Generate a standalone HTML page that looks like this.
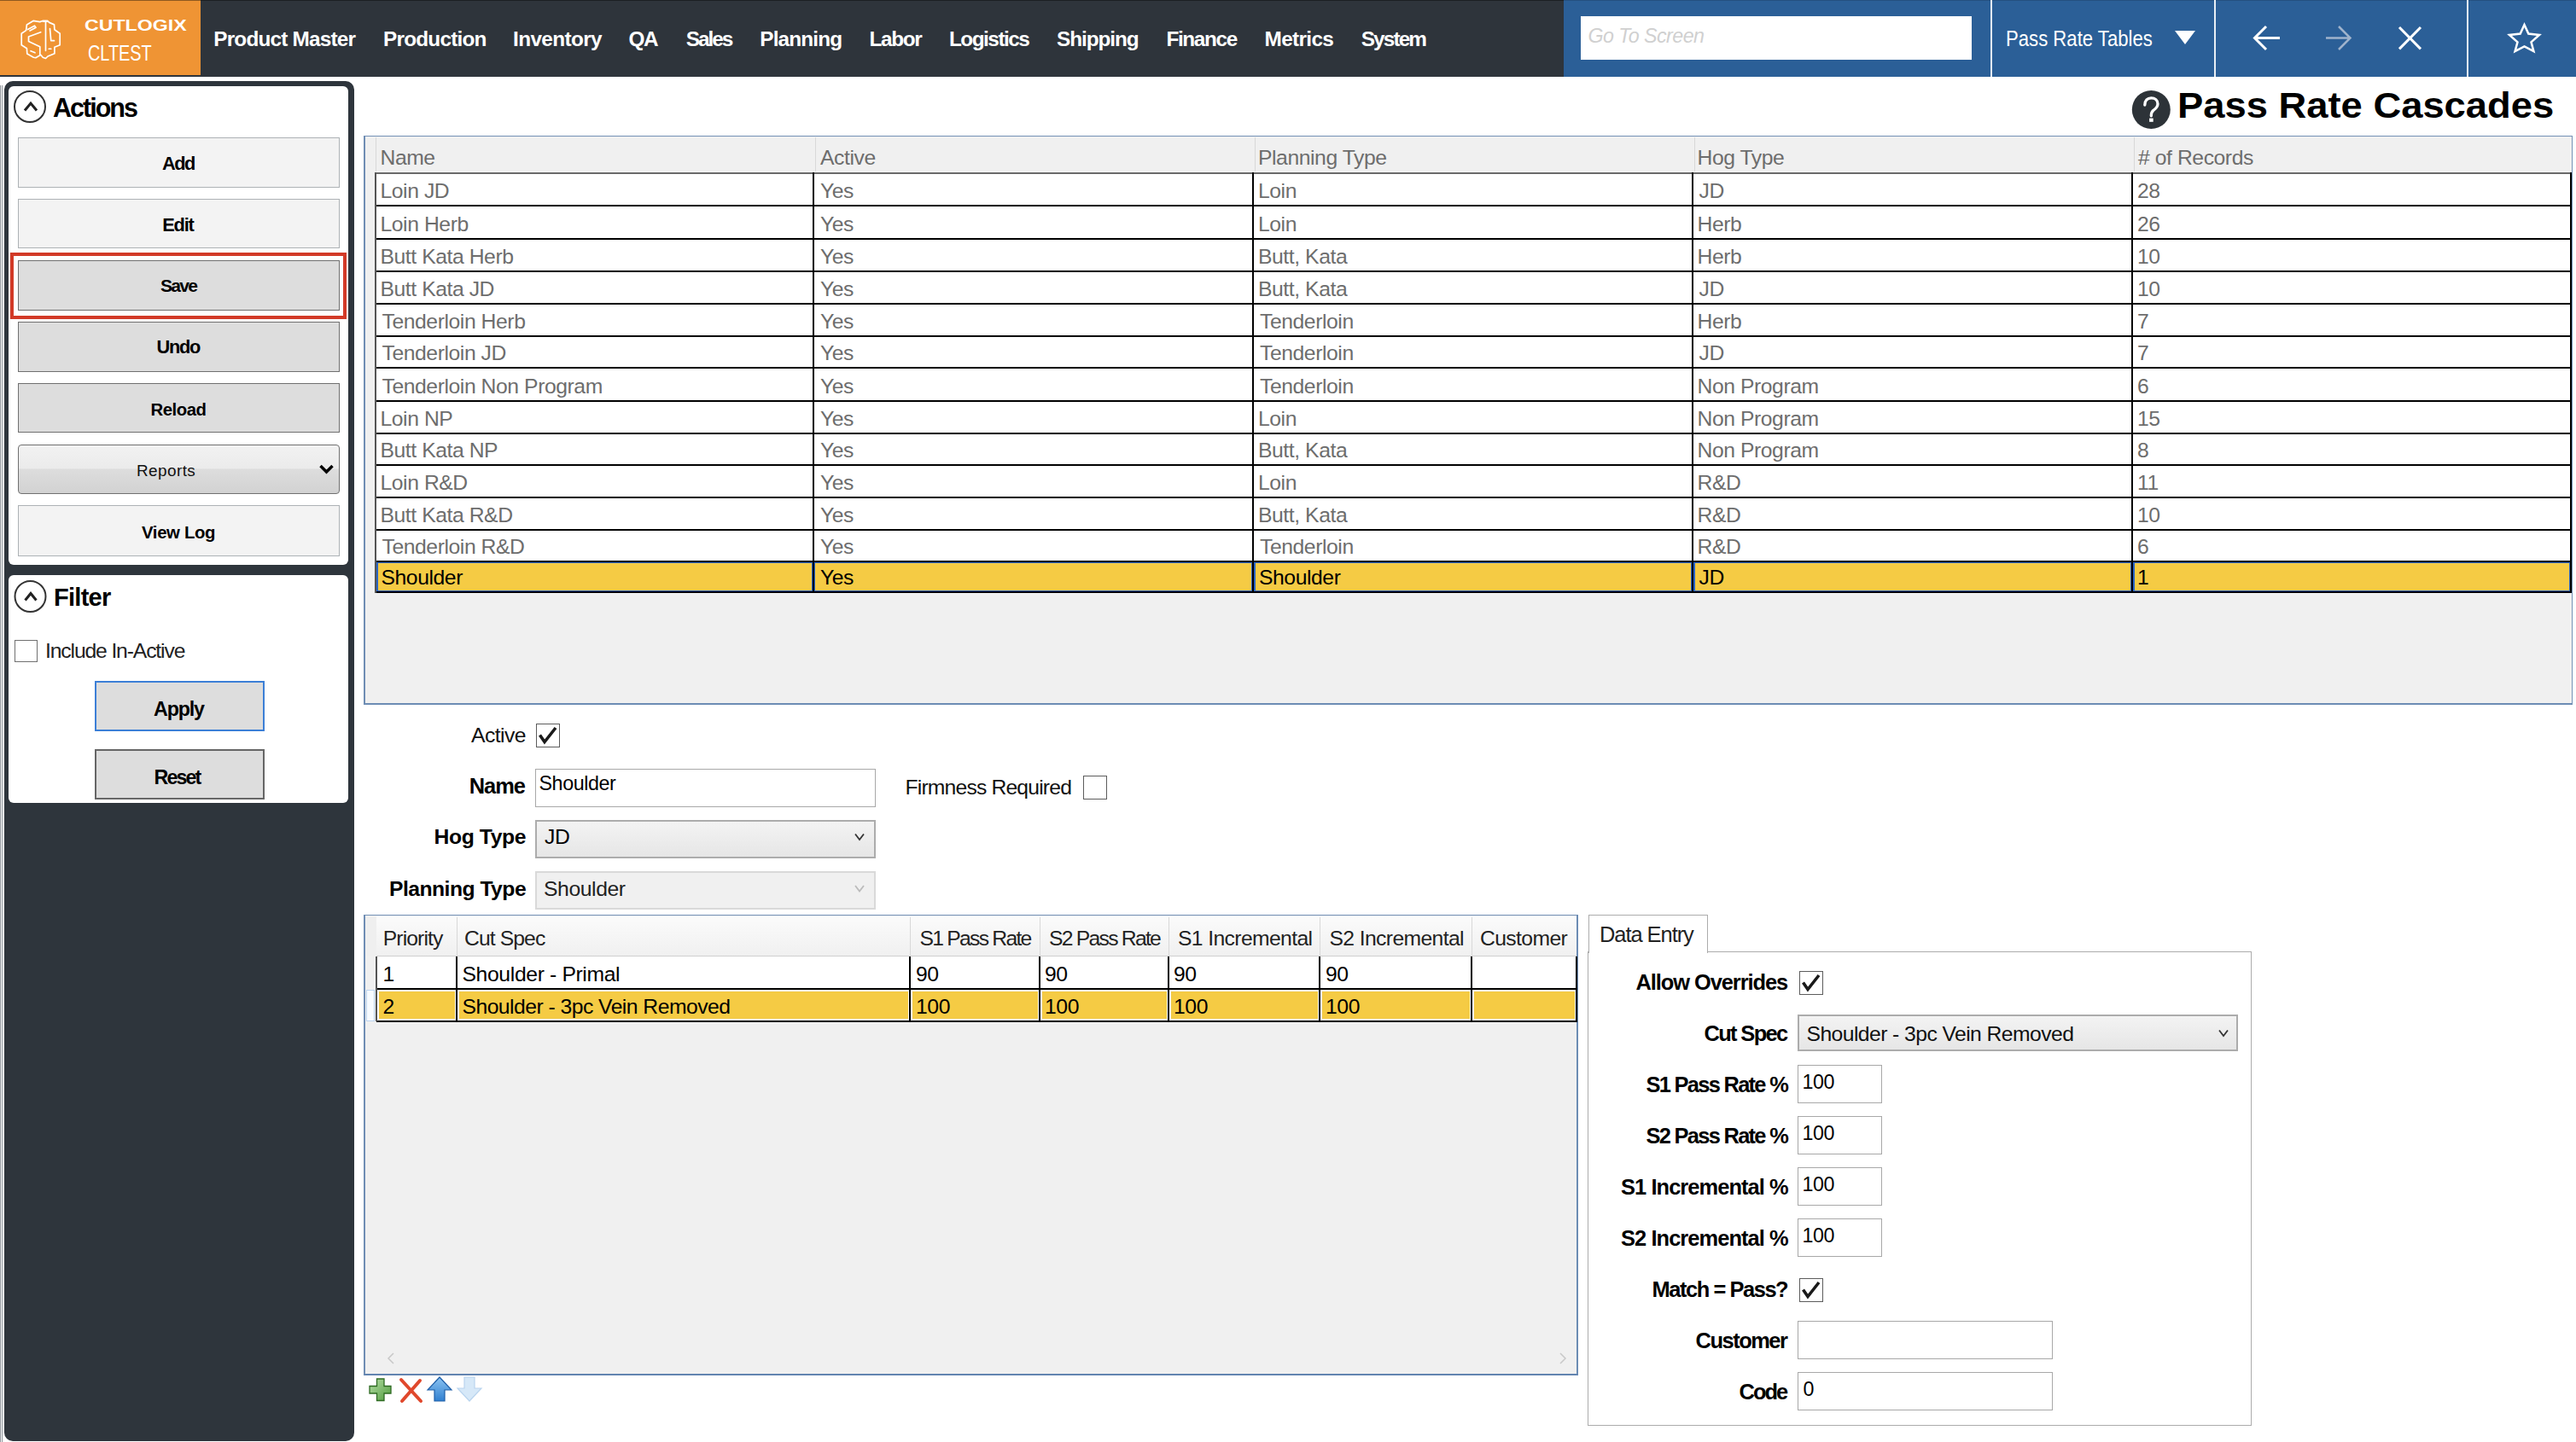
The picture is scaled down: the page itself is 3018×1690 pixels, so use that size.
<!DOCTYPE html>
<html><head><meta charset="utf-8"><style>
html,body{margin:0;padding:0;}
body{width:3018px;height:1690px;position:relative;overflow:hidden;background:#fff;font-family:"Liberation Sans",sans-serif;}
body>div,body>span,body>svg{position:absolute;box-sizing:border-box;}
.t{white-space:nowrap;line-height:normal;}
</style></head><body>
<div style="left:0px;top:0px;width:3018px;height:90px;background:#2e343b;"></div>
<div style="left:0px;top:0px;width:235px;height:88px;background:#ef9434;"></div>
<div style="left:1832px;top:0px;width:1186px;height:90px;background:#2b5f97;"></div>
<div style="left:0px;top:0px;width:1832px;height:1px;background:rgba(0,0,0,0.4);"></div>
<div style="left:1832px;top:0px;width:1186px;height:1px;background:rgba(0,0,0,0.15);"></div>
<div style="left:2332px;top:0px;width:2px;height:90px;background:#e8eef5;"></div>
<div style="left:2594px;top:0px;width:2px;height:90px;background:#e8eef5;"></div>
<div style="left:2890px;top:0px;width:2px;height:90px;background:#e8eef5;"></div>
<div style="left:1852px;top:19px;width:458px;height:51px;background:#fff;"></div>
<span class="t" style="left:1860.50px;top:29.20px;font-size:23.26px;color:#d0d0d0;font-style:italic;letter-spacing:-0.56px;">Go To Screen</span>
<span class="t" style="left:2350.28px;top:31.30px;font-size:25.73px;color:#fff;transform:scaleX(0.8607);transform-origin:0 0;">Pass Rate Tables</span>
<svg style="left:0;top:0" width="3018" height="90"><polygon points="2548,36 2572,36 2560,52" fill="#fff"/><g stroke="#fff" stroke-width="3" fill="none" stroke-linecap="butt"><path d="M2671,44.5 H2642 M2655,31 L2641.5,44.5 L2655,58"/><path d="M2811,32 L2836,57.4 M2836,32 L2811,57.4"/></g><g stroke="#9fb3cc" stroke-width="2.5" fill="none"><path d="M2725,44.5 H2753 M2740,31 L2753.5,44.5 L2740,58"/></g><polygon points="2957.5,29 2962.3,39.6 2975,40.9 2965.5,49.3 2968.4,60 2957.5,54.3 2946.6,60 2949.5,49.3 2940,40.9 2952.7,39.6" fill="none" stroke="#fff" stroke-width="2.5" stroke-linejoin="miter"/></svg>
<span class="t" style="left:250.25px;top:31.75px;font-size:24.35px;color:#fff;font-weight:bold;letter-spacing:-0.80px;">Product Master</span>
<span class="t" style="left:449.00px;top:31.75px;font-size:24.35px;color:#fff;font-weight:bold;letter-spacing:-0.78px;">Production</span>
<span class="t" style="left:601.00px;top:31.75px;font-size:24.35px;color:#fff;font-weight:bold;letter-spacing:-0.62px;">Inventory</span>
<span class="t" style="left:736.50px;top:31.75px;font-size:24.35px;color:#fff;font-weight:bold;letter-spacing:-1.42px;">QA</span>
<span class="t" style="left:803.75px;top:31.75px;font-size:24.35px;color:#fff;font-weight:bold;letter-spacing:-2.01px;">Sales</span>
<span class="t" style="left:890.25px;top:31.75px;font-size:24.35px;color:#fff;font-weight:bold;letter-spacing:-0.84px;">Planning</span>
<span class="t" style="left:1018.50px;top:31.75px;font-size:24.35px;color:#fff;font-weight:bold;letter-spacing:-1.34px;">Labor</span>
<span class="t" style="left:1112.00px;top:31.75px;font-size:24.35px;color:#fff;font-weight:bold;letter-spacing:-1.50px;">Logistics</span>
<span class="t" style="left:1238.00px;top:31.75px;font-size:24.35px;color:#fff;font-weight:bold;letter-spacing:-1.06px;">Shipping</span>
<span class="t" style="left:1366.50px;top:31.75px;font-size:24.35px;color:#fff;font-weight:bold;letter-spacing:-1.38px;">Finance</span>
<span class="t" style="left:1481.60px;top:31.75px;font-size:24.35px;color:#fff;font-weight:bold;letter-spacing:-0.66px;">Metrics</span>
<span class="t" style="left:1594.75px;top:31.75px;font-size:24.35px;color:#fff;font-weight:bold;letter-spacing:-1.87px;">System</span>
<span class="t" style="left:98.75px;top:19.25px;font-size:18.90px;color:#fff;font-weight:bold;transform:scaleX(1.2254);transform-origin:0 0;">CUTLOGIX</span>
<span class="t" style="left:103.24px;top:46.60px;font-size:26.16px;color:#fff;transform:scaleX(0.7600);transform-origin:0 0;">CLTEST</span>
<svg style="left:16px;top:16px" width="64" height="60" viewBox="0 0 64 60"><g fill="none" stroke="#fff" stroke-width="1.7" stroke-linejoin="round" stroke-linecap="round"><path d="M23.3,8.3 L30.8,9.6 L34.6,8.3 L39.6,8.3 L41.7,10.4 L47.5,12.9 L47.9,18.75 L54.2,23.3 L54.2,36.7 L47.9,39.2 L47.9,46.7 L40,50 L37.5,52.5 L34.2,51.25 L31.7,48.3 L25.8,51.7 L23.3,51.25 L15.8,47.1 L15.4,40.8 L9.2,36.7 L9.2,23.3 L14.6,19.6 L15.4,12.9 Z"/><path d="M37.5,9.2 V43.3 M34.6,9.2 H40"/><path d="M16.5,18.5 L24.5,14.2 L26,16.2 L19,20"/><path d="M31.7,21.7 L17.5,27 L17.5,32.5 L30.8,38.75 L30.8,48"/><path d="M20,43.75 L25,45.8"/><path d="M42.5,17.5 L43.75,31.7 L47.5,31.7 M41.25,41.25 L43.75,41.25"/></g></svg>
<div style="left:0px;top:100px;width:1px;height:1590px;background:#8d9399;"></div>
<div style="left:2px;top:100px;width:1px;height:1590px;background:#8d9399;"></div>
<div style="left:4.5px;top:94.5px;width:410px;height:1594.5px;background:#2e353c;border-radius:10px;"></div>
<div style="left:10.3px;top:100.5px;width:397.7px;height:561.5px;background:#fff;border-radius:6px;"></div>
<div style="left:10.3px;top:674px;width:397.7px;height:267px;background:#fff;border-radius:6px;"></div>
<svg style="left:0;top:90px" width="60" height="650"><g fill="none" stroke="#333" stroke-width="2"><circle cx="35" cy="35" r="18"/><circle cx="35.5" cy="609" r="18"/></g><g fill="none" stroke="#222" stroke-width="3"><path d="M29,39.5 L36,31 L43,39.5"/><path d="M29.5,613.5 L36,605.5 L42.5,613.5"/></g></svg>
<span class="t" style="left:62.00px;top:109.00px;font-size:30.52px;color:#000;font-weight:bold;letter-spacing:-1.99px;">Actions</span>
<span class="t" style="left:63.00px;top:684.00px;font-size:29.07px;color:#000;font-weight:bold;letter-spacing:-0.75px;">Filter</span>
<div style="left:21px;top:160.5px;width:377px;height:59.0px;background:#f3f3f3;border:1.5px solid #adb2b5;"></div>
<span class="t" style="left:190.00px;top:179.00px;font-size:21.80px;color:#000;font-weight:bold;letter-spacing:-1.53px;">Add</span>
<div style="left:21px;top:233px;width:377px;height:58px;background:#f3f3f3;border:1.5px solid #adb2b5;"></div>
<span class="t" style="left:190.25px;top:250.50px;font-size:21.80px;color:#000;font-weight:bold;letter-spacing:-1.22px;">Edit</span>
<div style="left:12px;top:296px;width:394px;height:78px;border:4.5px solid #d23a27;"></div>
<div style="left:21px;top:304.5px;width:377px;height:59.5px;background:#dddddd;border:1.5px solid #707070;"></div>
<span class="t" style="left:188.00px;top:323.00px;font-size:21.08px;color:#000;font-weight:bold;letter-spacing:-1.74px;">Save</span>
<div style="left:21px;top:377px;width:377px;height:58.5px;background:#dddddd;border:1.5px solid #707070;"></div>
<span class="t" style="left:183.50px;top:393.75px;font-size:21.80px;color:#000;font-weight:bold;letter-spacing:-1.29px;">Undo</span>
<div style="left:21px;top:449px;width:377px;height:58px;background:#dddddd;border:1.5px solid #707070;"></div>
<span class="t" style="left:176.60px;top:468.50px;font-size:20.35px;color:#000;font-weight:bold;letter-spacing:-0.51px;">Reload</span>
<div style="left:21px;top:521px;width:377px;height:58px;background:linear-gradient(#f2f2f2 0%,#ebebeb 48%,#dddddd 50%,#d2d2d2 100%);border:1.5px solid #707070;border-radius:4px;"></div>
<span class="t" style="left:160.00px;top:540.70px;font-size:18.90px;color:#111;letter-spacing:0.44px;">Reports</span>
<svg style="left:370px;top:540px" width="26" height="20"><path d="M5.5,6 L12.5,13 L19.5,6" fill="none" stroke="#000" stroke-width="3.5"/></svg>
<div style="left:21px;top:592.4px;width:377px;height:59.39999999999998px;background:#f3f3f3;border:1.5px solid #adb2b5;"></div>
<span class="t" style="left:166.00px;top:612.50px;font-size:20.35px;color:#000;font-weight:bold;letter-spacing:-0.35px;">View Log</span>
<div style="left:17px;top:750px;width:27px;height:26px;background:#fff;border:1.5px solid #707070;"></div>
<span class="t" style="left:53.00px;top:749.00px;font-size:24.71px;color:#222;letter-spacing:-1.14px;">Include In-Active</span>
<div style="left:111px;top:798px;width:199px;height:59px;background:#dddddd;border:2px solid #3c7fd6;"></div>
<span class="t" style="left:180.00px;top:817.50px;font-size:23.26px;color:#000;font-weight:bold;letter-spacing:-1.16px;">Apply</span>
<div style="left:111px;top:878px;width:199px;height:59px;background:#dddddd;border:2px solid #666;"></div>
<span class="t" style="left:180.50px;top:897.50px;font-size:23.26px;color:#000;font-weight:bold;letter-spacing:-1.90px;">Reset</span>
<svg style="left:2490px;top:100px" width="60" height="60"><circle cx="30.3" cy="28.5" r="22.5" fill="#2d3338"/><path d="M22.8,23 C22.8,17.5 26,14.8 30.3,14.8 C34.8,14.8 38,17.5 38,21.8 C38,25.8 35.2,27.6 32.8,29.4 C30.8,31 30.3,32.5 30.3,35.8" fill="none" stroke="#fff" stroke-width="3.3" stroke-linecap="round"/><rect x="28.1" y="38.6" width="4.6" height="4.2" fill="#fff"/></svg>
<span class="t" style="left:2550.90px;top:99.30px;font-size:43.31px;color:#000;font-weight:bold;transform:scaleX(1.0475);transform-origin:0 0;">Pass Rate Cascades</span>
<div style="left:426px;top:159px;width:2588px;height:667px;background:#f0f0f0;border:1.5px solid #7391b6;border-left:2.3px solid #6f8db4;border-bottom:2px solid #6c8cb4;"></div>
<div style="left:954.5px;top:161px;width:1px;height:40px;background:#d8d8d8;"></div>
<div style="left:1470px;top:161px;width:1px;height:40px;background:#d8d8d8;"></div>
<div style="left:1985px;top:161px;width:1px;height:40px;background:#d8d8d8;"></div>
<div style="left:2500px;top:161px;width:1px;height:40px;background:#d8d8d8;"></div>
<div style="left:440px;top:161px;width:1px;height:40px;background:#d8d8d8;"></div>
<div style="left:440px;top:202px;width:2573px;height:492px;background:#fff;"></div>
<div style="left:439px;top:202px;width:2574px;height:2px;background:#6a6a6a;"></div>
<div style="left:440px;top:657.5px;width:2573px;height:36.5px;background:#f5cb44;"></div>
<div style="left:440.5px;top:658.0px;width:512.0px;height:36.0px;border:2.2px solid #2a64c4;"></div>
<div style="left:953.0px;top:658.0px;width:515.0px;height:36.0px;border:2.2px solid #2a64c4;"></div>
<div style="left:1468.5px;top:658.0px;width:514.5px;height:36.0px;border:2.2px solid #2a64c4;"></div>
<div style="left:1983.5px;top:658.0px;width:514.5px;height:36.0px;border:2.2px solid #2a64c4;"></div>
<div style="left:2498.5px;top:658.0px;width:513.5px;height:36.0px;border:2.2px solid #2a64c4;"></div>
<div style="left:439px;top:240px;width:2574px;height:2px;background:#000;"></div>
<div style="left:439px;top:278.5px;width:2574px;height:2px;background:#000;"></div>
<div style="left:439px;top:316.5px;width:2574px;height:2px;background:#000;"></div>
<div style="left:439px;top:354.5px;width:2574px;height:2px;background:#000;"></div>
<div style="left:439px;top:392.75px;width:2574px;height:2px;background:#000;"></div>
<div style="left:439px;top:430px;width:2574px;height:2px;background:#000;"></div>
<div style="left:439px;top:468.5px;width:2574px;height:2px;background:#000;"></div>
<div style="left:439px;top:506.5px;width:2574px;height:2px;background:#000;"></div>
<div style="left:439px;top:544px;width:2574px;height:2px;background:#000;"></div>
<div style="left:439px;top:581.5px;width:2574px;height:2px;background:#000;"></div>
<div style="left:439px;top:620px;width:2574px;height:2px;background:#000;"></div>
<div style="left:439px;top:656.5px;width:2574px;height:2px;background:#000;"></div>
<div style="left:439px;top:693px;width:2574px;height:2px;background:#000;"></div>
<div style="left:951.5px;top:202px;width:2px;height:493px;background:#000;"></div>
<div style="left:1467px;top:202px;width:2px;height:493px;background:#000;"></div>
<div style="left:1982px;top:202px;width:2px;height:493px;background:#000;"></div>
<div style="left:2497px;top:202px;width:2px;height:493px;background:#000;"></div>
<div style="left:3011px;top:202px;width:2px;height:493px;background:#000;"></div>
<div style="left:439px;top:202px;width:2px;height:493px;background:#555;"></div>
<span class="t" style="left:445.50px;top:170.50px;font-size:24.71px;color:#6d6d6d;letter-spacing:-0.43px;">Name</span>
<span class="t" style="left:961.00px;top:170.50px;font-size:24.71px;color:#6d6d6d;letter-spacing:-0.43px;">Active</span>
<span class="t" style="left:1474.00px;top:170.50px;font-size:24.71px;color:#6d6d6d;letter-spacing:-0.43px;">Planning Type</span>
<span class="t" style="left:1988.50px;top:170.50px;font-size:24.71px;color:#6d6d6d;letter-spacing:-0.43px;">Hog Type</span>
<span class="t" style="left:2505.00px;top:170.50px;font-size:24.71px;color:#6d6d6d;letter-spacing:-0.43px;"># of Records</span>
<span class="t" style="left:445.50px;top:210.00px;font-size:24.71px;color:#6d6d6d;letter-spacing:-0.43px;">Loin JD</span>
<span class="t" style="left:961.00px;top:210.00px;font-size:24.71px;color:#6d6d6d;letter-spacing:-0.43px;">Yes</span>
<span class="t" style="left:1474.00px;top:210.00px;font-size:24.71px;color:#6d6d6d;letter-spacing:-0.43px;">Loin</span>
<span class="t" style="left:1990.50px;top:210.00px;font-size:24.71px;color:#6d6d6d;letter-spacing:-0.43px;">JD</span>
<span class="t" style="left:2504.00px;top:210.00px;font-size:24.71px;color:#6d6d6d;letter-spacing:-0.43px;">28</span>
<span class="t" style="left:445.50px;top:248.50px;font-size:24.71px;color:#6d6d6d;letter-spacing:-0.43px;">Loin Herb</span>
<span class="t" style="left:961.00px;top:248.50px;font-size:24.71px;color:#6d6d6d;letter-spacing:-0.43px;">Yes</span>
<span class="t" style="left:1474.00px;top:248.50px;font-size:24.71px;color:#6d6d6d;letter-spacing:-0.43px;">Loin</span>
<span class="t" style="left:1988.50px;top:248.50px;font-size:24.71px;color:#6d6d6d;letter-spacing:-0.43px;">Herb</span>
<span class="t" style="left:2504.00px;top:248.50px;font-size:24.71px;color:#6d6d6d;letter-spacing:-0.43px;">26</span>
<span class="t" style="left:445.50px;top:286.50px;font-size:24.71px;color:#6d6d6d;letter-spacing:-0.43px;">Butt Kata Herb</span>
<span class="t" style="left:961.00px;top:286.50px;font-size:24.71px;color:#6d6d6d;letter-spacing:-0.43px;">Yes</span>
<span class="t" style="left:1474.00px;top:286.50px;font-size:24.71px;color:#6d6d6d;letter-spacing:-0.43px;">Butt, Kata</span>
<span class="t" style="left:1988.50px;top:286.50px;font-size:24.71px;color:#6d6d6d;letter-spacing:-0.43px;">Herb</span>
<span class="t" style="left:2504.00px;top:286.50px;font-size:24.71px;color:#6d6d6d;letter-spacing:-0.43px;">10</span>
<span class="t" style="left:445.50px;top:324.50px;font-size:24.71px;color:#6d6d6d;letter-spacing:-0.43px;">Butt Kata JD</span>
<span class="t" style="left:961.00px;top:324.50px;font-size:24.71px;color:#6d6d6d;letter-spacing:-0.43px;">Yes</span>
<span class="t" style="left:1474.00px;top:324.50px;font-size:24.71px;color:#6d6d6d;letter-spacing:-0.43px;">Butt, Kata</span>
<span class="t" style="left:1990.50px;top:324.50px;font-size:24.71px;color:#6d6d6d;letter-spacing:-0.43px;">JD</span>
<span class="t" style="left:2504.00px;top:324.50px;font-size:24.71px;color:#6d6d6d;letter-spacing:-0.43px;">10</span>
<span class="t" style="left:447.50px;top:362.75px;font-size:24.71px;color:#6d6d6d;letter-spacing:-0.43px;">Tenderloin Herb</span>
<span class="t" style="left:961.00px;top:362.75px;font-size:24.71px;color:#6d6d6d;letter-spacing:-0.43px;">Yes</span>
<span class="t" style="left:1476.00px;top:362.75px;font-size:24.71px;color:#6d6d6d;letter-spacing:-0.43px;">Tenderloin</span>
<span class="t" style="left:1988.50px;top:362.75px;font-size:24.71px;color:#6d6d6d;letter-spacing:-0.43px;">Herb</span>
<span class="t" style="left:2504.00px;top:362.75px;font-size:24.71px;color:#6d6d6d;letter-spacing:-0.43px;">7</span>
<span class="t" style="left:447.50px;top:400.00px;font-size:24.71px;color:#6d6d6d;letter-spacing:-0.43px;">Tenderloin JD</span>
<span class="t" style="left:961.00px;top:400.00px;font-size:24.71px;color:#6d6d6d;letter-spacing:-0.43px;">Yes</span>
<span class="t" style="left:1476.00px;top:400.00px;font-size:24.71px;color:#6d6d6d;letter-spacing:-0.43px;">Tenderloin</span>
<span class="t" style="left:1990.50px;top:400.00px;font-size:24.71px;color:#6d6d6d;letter-spacing:-0.43px;">JD</span>
<span class="t" style="left:2504.00px;top:400.00px;font-size:24.71px;color:#6d6d6d;letter-spacing:-0.43px;">7</span>
<span class="t" style="left:447.50px;top:438.50px;font-size:24.71px;color:#6d6d6d;letter-spacing:-0.43px;">Tenderloin Non Program</span>
<span class="t" style="left:961.00px;top:438.50px;font-size:24.71px;color:#6d6d6d;letter-spacing:-0.43px;">Yes</span>
<span class="t" style="left:1476.00px;top:438.50px;font-size:24.71px;color:#6d6d6d;letter-spacing:-0.43px;">Tenderloin</span>
<span class="t" style="left:1988.50px;top:438.50px;font-size:24.71px;color:#6d6d6d;letter-spacing:-0.43px;">Non Program</span>
<span class="t" style="left:2504.00px;top:438.50px;font-size:24.71px;color:#6d6d6d;letter-spacing:-0.43px;">6</span>
<span class="t" style="left:445.50px;top:476.50px;font-size:24.71px;color:#6d6d6d;letter-spacing:-0.43px;">Loin NP</span>
<span class="t" style="left:961.00px;top:476.50px;font-size:24.71px;color:#6d6d6d;letter-spacing:-0.43px;">Yes</span>
<span class="t" style="left:1474.00px;top:476.50px;font-size:24.71px;color:#6d6d6d;letter-spacing:-0.43px;">Loin</span>
<span class="t" style="left:1988.50px;top:476.50px;font-size:24.71px;color:#6d6d6d;letter-spacing:-0.43px;">Non Program</span>
<span class="t" style="left:2504.00px;top:476.50px;font-size:24.71px;color:#6d6d6d;letter-spacing:-0.43px;">15</span>
<span class="t" style="left:445.50px;top:514.00px;font-size:24.71px;color:#6d6d6d;letter-spacing:-0.43px;">Butt Kata NP</span>
<span class="t" style="left:961.00px;top:514.00px;font-size:24.71px;color:#6d6d6d;letter-spacing:-0.43px;">Yes</span>
<span class="t" style="left:1474.00px;top:514.00px;font-size:24.71px;color:#6d6d6d;letter-spacing:-0.43px;">Butt, Kata</span>
<span class="t" style="left:1988.50px;top:514.00px;font-size:24.71px;color:#6d6d6d;letter-spacing:-0.43px;">Non Program</span>
<span class="t" style="left:2504.00px;top:514.00px;font-size:24.71px;color:#6d6d6d;letter-spacing:-0.43px;">8</span>
<span class="t" style="left:445.50px;top:551.50px;font-size:24.71px;color:#6d6d6d;letter-spacing:-0.43px;">Loin R&amp;D</span>
<span class="t" style="left:961.00px;top:551.50px;font-size:24.71px;color:#6d6d6d;letter-spacing:-0.43px;">Yes</span>
<span class="t" style="left:1474.00px;top:551.50px;font-size:24.71px;color:#6d6d6d;letter-spacing:-0.43px;">Loin</span>
<span class="t" style="left:1988.50px;top:551.50px;font-size:24.71px;color:#6d6d6d;letter-spacing:-0.43px;">R&amp;D</span>
<span class="t" style="left:2504.00px;top:551.50px;font-size:24.71px;color:#6d6d6d;letter-spacing:-0.43px;">11</span>
<span class="t" style="left:445.50px;top:590.00px;font-size:24.71px;color:#6d6d6d;letter-spacing:-0.43px;">Butt Kata R&amp;D</span>
<span class="t" style="left:961.00px;top:590.00px;font-size:24.71px;color:#6d6d6d;letter-spacing:-0.43px;">Yes</span>
<span class="t" style="left:1474.00px;top:590.00px;font-size:24.71px;color:#6d6d6d;letter-spacing:-0.43px;">Butt, Kata</span>
<span class="t" style="left:1988.50px;top:590.00px;font-size:24.71px;color:#6d6d6d;letter-spacing:-0.43px;">R&amp;D</span>
<span class="t" style="left:2504.00px;top:590.00px;font-size:24.71px;color:#6d6d6d;letter-spacing:-0.43px;">10</span>
<span class="t" style="left:447.50px;top:626.50px;font-size:24.71px;color:#6d6d6d;letter-spacing:-0.43px;">Tenderloin R&amp;D</span>
<span class="t" style="left:961.00px;top:626.50px;font-size:24.71px;color:#6d6d6d;letter-spacing:-0.43px;">Yes</span>
<span class="t" style="left:1476.00px;top:626.50px;font-size:24.71px;color:#6d6d6d;letter-spacing:-0.43px;">Tenderloin</span>
<span class="t" style="left:1988.50px;top:626.50px;font-size:24.71px;color:#6d6d6d;letter-spacing:-0.43px;">R&amp;D</span>
<span class="t" style="left:2504.00px;top:626.50px;font-size:24.71px;color:#6d6d6d;letter-spacing:-0.43px;">6</span>
<span class="t" style="left:446.50px;top:663.00px;font-size:24.71px;color:#000;letter-spacing:-0.43px;">Shoulder</span>
<span class="t" style="left:961.00px;top:663.00px;font-size:24.71px;color:#000;letter-spacing:-0.43px;">Yes</span>
<span class="t" style="left:1475.00px;top:663.00px;font-size:24.71px;color:#000;letter-spacing:-0.43px;">Shoulder</span>
<span class="t" style="left:1990.50px;top:663.00px;font-size:24.71px;color:#000;letter-spacing:-0.43px;">JD</span>
<span class="t" style="left:2504.00px;top:663.00px;font-size:24.71px;color:#000;letter-spacing:-0.43px;">1</span>
<span class="t" style="left:552.00px;top:848.00px;font-size:24.71px;color:#111;letter-spacing:-0.55px;">Active</span>
<div style="left:628px;top:848px;width:28px;height:28px;background:#fff;border:1.7px solid #5c5c5c;"></div>
<span class="t" style="left:549.75px;top:907.00px;font-size:25.44px;color:#000;font-weight:bold;letter-spacing:-1.03px;">Name</span>
<div style="left:626.5px;top:900.75px;width:399px;height:45px;background:#fff;border:1.6px solid #a8a8a8;"></div>
<span class="t" style="left:631.50px;top:904.50px;font-size:23.26px;color:#000;letter-spacing:-0.40px;">Shoulder</span>
<span class="t" style="left:1060.50px;top:909.00px;font-size:24.71px;color:#111;letter-spacing:-0.83px;">Firmness Required</span>
<div style="left:1268.5px;top:908.5px;width:28px;height:28px;background:#fff;border:1.7px solid #5c5c5c;"></div>
<span class="t" style="left:508.50px;top:967.00px;font-size:24.71px;color:#000;font-weight:bold;letter-spacing:-0.38px;">Hog Type</span>
<div style="left:626.5px;top:960.5px;width:399px;height:45px;background:linear-gradient(#f3f3f3,#e6e6e6);border:2px solid #acacac;"></div>
<span class="t" style="left:638.00px;top:967.00px;font-size:24.71px;color:#000;letter-spacing:-0.40px;">JD</span>
<span class="t" style="left:456.00px;top:1028.00px;font-size:24.71px;color:#000;font-weight:bold;letter-spacing:-0.53px;">Planning Type</span>
<div style="left:626.5px;top:1020.5px;width:399px;height:45px;background:#f0f0f0;border:2px solid #d9d9d9;"></div>
<span class="t" style="left:637.00px;top:1028.00px;font-size:24.71px;color:#222;letter-spacing:-0.40px;">Shoulder</span>
<svg style="left:0;top:0;width:1100px;height:1100px"><g fill="none" stroke-width="1.8"><path d="M632.5,861.5 L638,869.5 L651,853" stroke="#1a1a1a" stroke-width="3.6"/><path d="M1002,977.5 L1007,984 L1012,977.5" stroke="#333"/><path d="M1002,1038 L1007,1044.5 L1012,1038" stroke="#bbb"/></g></svg>
<div style="left:426px;top:1072px;width:1423px;height:540px;background:#f0f0f0;border:1.5px solid #7391b6;border-left:2.3px solid #6f8db4;border-right:2px solid #6c8cb4;border-bottom:2.5px solid #6284b0;"></div>
<div style="left:428px;top:1073.5px;width:1419px;height:47.5px;background:linear-gradient(#fbfbfb,#f0f0f0);"></div>
<div style="left:428px;top:1073.5px;width:13px;height:47.5px;background:#efefef;"></div>
<div style="left:535px;top:1075px;width:1px;height:45px;background:#d8d8d8;"></div>
<div style="left:1066px;top:1075px;width:1px;height:45px;background:#d8d8d8;"></div>
<div style="left:1218px;top:1075px;width:1px;height:45px;background:#d8d8d8;"></div>
<div style="left:1369px;top:1075px;width:1px;height:45px;background:#d8d8d8;"></div>
<div style="left:1546px;top:1075px;width:1px;height:45px;background:#d8d8d8;"></div>
<div style="left:1724px;top:1075px;width:1px;height:45px;background:#d8d8d8;"></div>
<div style="left:441px;top:1120px;width:1406px;height:1px;background:#d0d0d0;"></div>
<div style="left:441px;top:1121px;width:1406px;height:38px;background:#fff;"></div>
<div style="left:441px;top:1159px;width:1406px;height:38px;background:#f5cb44;"></div>
<div style="left:442px;top:1160px;width:93px;height:36px;border:2px solid #fbfbfb;"></div>
<div style="left:536px;top:1160px;width:530px;height:36px;border:2px solid #fbfbfb;"></div>
<div style="left:1067px;top:1160px;width:151px;height:36px;border:2px solid #fbfbfb;"></div>
<div style="left:1219px;top:1160px;width:150px;height:36px;border:2px solid #fbfbfb;"></div>
<div style="left:1370px;top:1160px;width:176px;height:36px;border:2px solid #fbfbfb;"></div>
<div style="left:1547px;top:1160px;width:177px;height:36px;border:2px solid #fbfbfb;"></div>
<div style="left:1725px;top:1160px;width:122px;height:36px;border:2px solid #fbfbfb;"></div>
<div style="left:441px;top:1158px;width:1407px;height:2px;background:#000;"></div>
<div style="left:441px;top:1196px;width:1407px;height:2px;background:#000;"></div>
<div style="left:534px;top:1121px;width:2px;height:76px;background:#000;"></div>
<div style="left:1065px;top:1121px;width:2px;height:76px;background:#000;"></div>
<div style="left:1217px;top:1121px;width:2px;height:76px;background:#000;"></div>
<div style="left:1368px;top:1121px;width:2px;height:76px;background:#000;"></div>
<div style="left:1545px;top:1121px;width:2px;height:76px;background:#000;"></div>
<div style="left:1723px;top:1121px;width:2px;height:76px;background:#000;"></div>
<div style="left:1846px;top:1121px;width:2px;height:76px;background:#000;"></div>
<div style="left:440px;top:1121px;width:2px;height:76px;background:#555;"></div>
<div style="left:429px;top:1160px;width:10px;height:37px;border:1px solid #bcd4ef;background:#f7fbff;"></div>
<span class="t" style="left:448.75px;top:1085.50px;font-size:24.71px;color:#222;letter-spacing:-0.90px;">Priority</span>
<span class="t" style="left:544.00px;top:1085.50px;font-size:24.71px;color:#222;letter-spacing:-0.90px;">Cut Spec</span>
<span class="t" style="left:1077.50px;top:1085.50px;font-size:24.71px;color:#222;letter-spacing:-1.75px;">S1 Pass Rate</span>
<span class="t" style="left:1229.00px;top:1085.50px;font-size:24.71px;color:#222;letter-spacing:-1.75px;">S2 Pass Rate</span>
<span class="t" style="left:1380.00px;top:1085.50px;font-size:24.71px;color:#222;letter-spacing:-0.62px;">S1 Incremental</span>
<span class="t" style="left:1557.50px;top:1085.50px;font-size:24.71px;color:#222;letter-spacing:-0.62px;">S2 Incremental</span>
<span class="t" style="left:1734.00px;top:1085.50px;font-size:24.71px;color:#222;letter-spacing:-0.61px;">Customer</span>
<span class="t" style="left:448.50px;top:1127.50px;font-size:24.71px;color:#000;letter-spacing:-0.40px;">1</span>
<span class="t" style="left:541.50px;top:1127.50px;font-size:24.71px;color:#000;letter-spacing:-0.36px;">Shoulder - Primal</span>
<span class="t" style="left:1073.00px;top:1127.50px;font-size:24.71px;color:#000;letter-spacing:-0.40px;">90</span>
<span class="t" style="left:1224.00px;top:1127.50px;font-size:24.71px;color:#000;letter-spacing:-0.40px;">90</span>
<span class="t" style="left:1375.00px;top:1127.50px;font-size:24.71px;color:#000;letter-spacing:-0.40px;">90</span>
<span class="t" style="left:1553.00px;top:1127.50px;font-size:24.71px;color:#000;letter-spacing:-0.40px;">90</span>
<span class="t" style="left:448.50px;top:1165.50px;font-size:24.71px;color:#000;letter-spacing:-0.40px;">2</span>
<span class="t" style="left:541.50px;top:1165.50px;font-size:24.71px;color:#000;letter-spacing:-0.53px;">Shoulder - 3pc Vein Removed</span>
<span class="t" style="left:1073.00px;top:1165.50px;font-size:24.71px;color:#000;letter-spacing:-0.40px;">100</span>
<span class="t" style="left:1224.00px;top:1165.50px;font-size:24.71px;color:#000;letter-spacing:-0.40px;">100</span>
<span class="t" style="left:1375.00px;top:1165.50px;font-size:24.71px;color:#000;letter-spacing:-0.40px;">100</span>
<span class="t" style="left:1553.00px;top:1165.50px;font-size:24.71px;color:#000;letter-spacing:-0.40px;">100</span>
<svg style="left:0;top:0;width:1900px;height:1690px"><g fill="none" stroke="#c8c8c8" stroke-width="1.5"><path d="M461,1586 L455,1592 L461,1598"/><path d="M1828,1586 L1834,1592 L1828,1598"/></g><defs><linearGradient id="gg" x1="0" y1="0" x2="1" y2="1"><stop offset="0" stop-color="#b8e0a8"/><stop offset="1" stop-color="#4f9a3c"/></linearGradient><linearGradient id="bg" x1="0" y1="0" x2="0" y2="1"><stop offset="0" stop-color="#8cc4f2"/><stop offset="1" stop-color="#2f7fd0"/></linearGradient></defs><path d="M441.5,1616 h8.5 v8.5 h8 v8.5 h-8 v8.5 h-8.5 v-8.5 h-8.5 v-8.5 h8.5 z" fill="url(#gg)" stroke="#2e6b22" stroke-width="1.3"/><path d="M470,1617 L493,1642 M492,1618 L471,1642" stroke="#e0482c" stroke-width="4" fill="none" stroke-linecap="round"/><path d="M515,1614 L529,1629 h-8 v13 h-12 v-13 h-8 z" fill="url(#bg)" stroke="#1f5fa8" stroke-width="1.2"/><path d="M544,1614 h12 v13 h8 L550,1642 L536,1627 h8 z" fill="#d6e8f8" stroke="#b9d4ee" stroke-width="1.2"/></svg>
<div style="left:1860px;top:1115px;width:778px;height:556px;background:#fff;border:1.5px solid #acacac;"></div>
<div style="left:1861px;top:1072px;width:140px;height:45px;background:#fff;border:1.5px solid #acacac;border-bottom:none;"></div>
<span class="t" style="left:1874.00px;top:1081.00px;font-size:25.44px;color:#222;letter-spacing:-1.04px;">Data Entry</span>
<span class="t" style="left:1916.50px;top:1137.00px;font-size:25.44px;color:#000;font-weight:bold;letter-spacing:-1.07px;">Allow Overrides</span>
<span class="t" style="left:1996.50px;top:1197.00px;font-size:25.44px;color:#000;font-weight:bold;letter-spacing:-1.65px;">Cut Spec</span>
<span class="t" style="left:1928.50px;top:1257.00px;font-size:25.44px;color:#000;font-weight:bold;letter-spacing:-1.71px;">S1 Pass Rate %</span>
<span class="t" style="left:1928.50px;top:1317.00px;font-size:25.44px;color:#000;font-weight:bold;letter-spacing:-1.71px;">S2 Pass Rate %</span>
<span class="t" style="left:1899.00px;top:1377.00px;font-size:25.44px;color:#000;font-weight:bold;letter-spacing:-0.93px;">S1 Incremental %</span>
<span class="t" style="left:1899.00px;top:1437.00px;font-size:25.44px;color:#000;font-weight:bold;letter-spacing:-0.93px;">S2 Incremental %</span>
<span class="t" style="left:1935.50px;top:1497.00px;font-size:25.44px;color:#000;font-weight:bold;letter-spacing:-1.44px;">Match = Pass?</span>
<span class="t" style="left:1986.50px;top:1557.00px;font-size:25.44px;color:#000;font-weight:bold;letter-spacing:-1.47px;">Customer</span>
<span class="t" style="left:2037.50px;top:1617.00px;font-size:25.44px;color:#000;font-weight:bold;letter-spacing:-1.97px;">Code</span>
<div style="left:2108px;top:1138px;width:28px;height:28px;background:#fff;border:1.7px solid #5c5c5c;"></div>
<div style="left:2108px;top:1498px;width:28px;height:28px;background:#fff;border:1.7px solid #5c5c5c;"></div>
<div style="left:2106px;top:1189px;width:516px;height:43px;background:linear-gradient(#f3f3f3,#e6e6e6);border:2px solid #acacac;"></div>
<span class="t" style="left:2116.50px;top:1198.00px;font-size:24.71px;color:#111;letter-spacing:-0.57px;">Shoulder - 3pc Vein Removed</span>
<div style="left:2106px;top:1248px;width:99px;height:45px;background:#fff;border:1.6px solid #a8a8a8;"></div>
<span class="t" style="left:2111.50px;top:1255.00px;font-size:23.26px;color:#000;letter-spacing:-0.40px;">100</span>
<div style="left:2106px;top:1308px;width:99px;height:45px;background:#fff;border:1.6px solid #a8a8a8;"></div>
<span class="t" style="left:2111.50px;top:1315.00px;font-size:23.26px;color:#000;letter-spacing:-0.40px;">100</span>
<div style="left:2106px;top:1368px;width:99px;height:45px;background:#fff;border:1.6px solid #a8a8a8;"></div>
<span class="t" style="left:2111.50px;top:1375.00px;font-size:23.26px;color:#000;letter-spacing:-0.40px;">100</span>
<div style="left:2106px;top:1428px;width:99px;height:45px;background:#fff;border:1.6px solid #a8a8a8;"></div>
<span class="t" style="left:2111.50px;top:1435.00px;font-size:23.26px;color:#000;letter-spacing:-0.40px;">100</span>
<div style="left:2106px;top:1547.7px;width:299px;height:45px;background:#fff;border:1.6px solid #a8a8a8;"></div>
<div style="left:2106px;top:1607.7px;width:299px;height:45px;background:#fff;border:1.6px solid #a8a8a8;"></div>
<span class="t" style="left:2112.50px;top:1615.00px;font-size:23.26px;color:#000;">0</span>
<svg style="left:0;top:0;width:2700px;height:1690px"><g fill="none"><path d="M2112.5,1151.5 L2118,1159.5 L2131,1143" stroke="#1a1a1a" stroke-width="3.6"/><path d="M2112.5,1511.5 L2118,1519.5 L2131,1503" stroke="#1a1a1a" stroke-width="3.6"/><path d="M2600,1207.5 L2605,1214 L2610,1207.5" stroke="#333" stroke-width="1.8"/></g></svg>
</body></html>
